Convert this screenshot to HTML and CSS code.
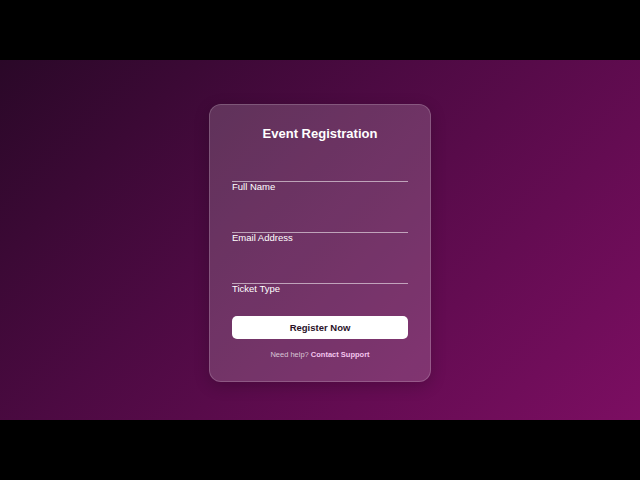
FILE: index.html
```html
<!DOCTYPE html>
<html lang="en">
<head>
<meta charset="utf-8">
<title>Event Registration</title>
<link rel="stylesheet" href="styles.css">
</head>
<body>
<main class="stage">
  <form class="card">
    <h1 class="title">Event Registration</h1>
    <div class="field">
      <input class="input" type="text" id="name">
      <label class="label" for="name">Full Name</label>
    </div>
    <div class="field">
      <input class="input" type="email" id="email">
      <label class="label" for="email">Email Address</label>
    </div>
    <div class="field">
      <input class="input" type="text" id="ticket">
      <label class="label" for="ticket">Ticket Type</label>
    </div>
    <button class="btn" type="button">Register Now</button>
    <p class="help">Need help? <a class="help-link" href="#">Contact Support</a></p>
  </form>
</main>
</body>
</html>
```
FILE: styles.css
```css
html, body {
  margin: 0;
  padding: 0;
  height: 100%;
  background: #000;
}
body {
  display: flex;
  align-items: center;
  justify-content: center;
  font-family: "Liberation Sans", Arial, sans-serif;
}
.stage {
  box-sizing: border-box;
  width: 640px;
  height: 360px;
  padding-top: 6px;
  background: linear-gradient(135deg, #2a0828 0%, #4c0a42 40%, #7c0e62 100%);
  display: flex;
  align-items: center;
  justify-content: center;
}
.card {
  box-sizing: border-box;
  width: 222px;
  padding: 20px 22px 21px;
  border-radius: 12px;
  background: rgba(255, 255, 255, 0.17);
  border: 1px solid rgba(255, 255, 255, 0.18);
  box-shadow: 0 4px 16px rgba(0, 0, 0, 0.2);
  display: flex;
  flex-direction: column;
}
.title {
  margin: 0 0 12px;
  font-size: 13px;
  line-height: 17px;
  font-weight: bold;
  color: #fff;
  text-align: center;
}
.field {
  display: flex;
  flex-direction: column;
  margin-bottom: 14px;
}
.input {
  box-sizing: border-box;
  height: 28px;
  padding: 0;
  margin: 0;
  border: none;
  border-bottom: 1px solid rgba(255, 255, 255, 0.55);
  background: transparent;
  color: #fff;
  outline: none;
}
.label {
  font-size: 9.5px;
  line-height: 9px;
  color: #fff;
}
.btn {
  margin-top: 9px;
  height: 23px;
  border: none;
  border-radius: 5px;
  background: #fff;
  color: #2a1228;
  font-family: "Liberation Sans", Arial, sans-serif;
  font-size: 9.5px;
  font-weight: bold;
  cursor: pointer;
}
.help {
  margin: 11px 0 0;
  font-size: 7.5px;
  line-height: 10px;
  text-align: center;
  color: rgba(255, 255, 255, 0.72);
}
.help-link {
  color: #f4c4ee;
  font-weight: bold;
  text-decoration: none;
}
```
